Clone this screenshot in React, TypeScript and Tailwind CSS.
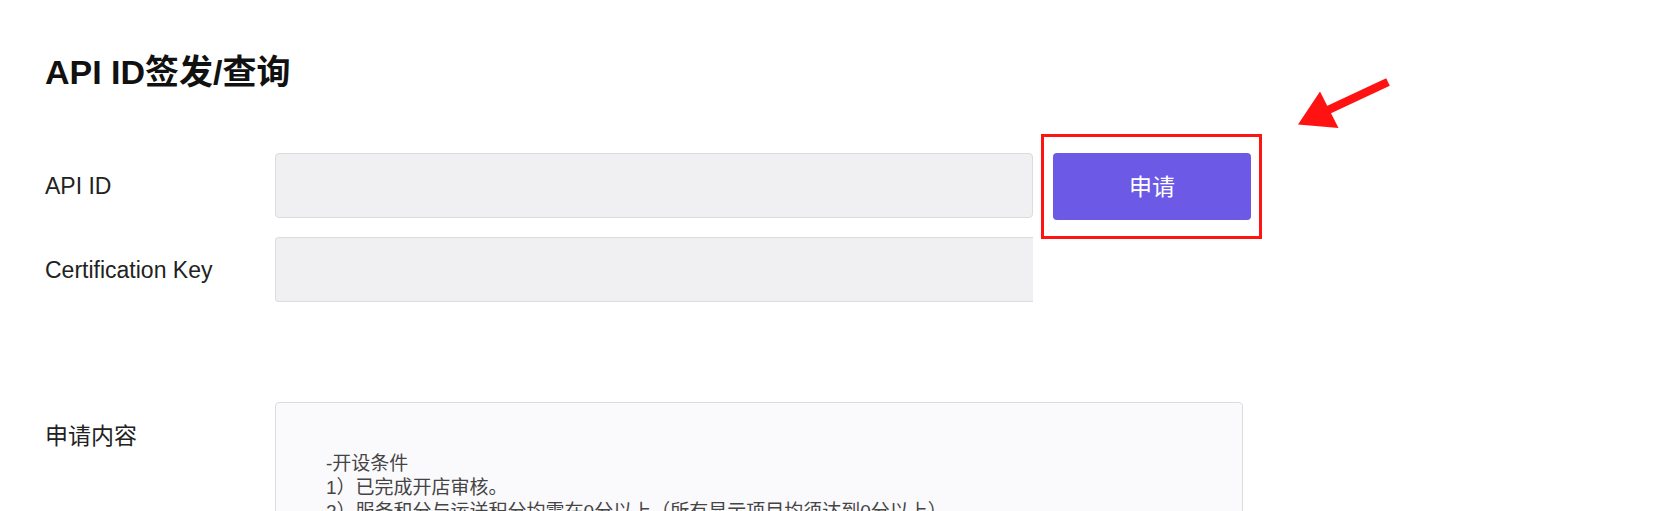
import React from "react";

const font = { fontFamily: '"Liberation Sans", "Noto Sans CJK SC", sans-serif' };

export default function App() {
  return (
    <div
      className="relative w-full h-[511px] overflow-hidden bg-white pl-[45px] pt-[52px] text-[#222]"
      style={font}
    >
      <h1 className="text-[34px] leading-[40px] font-bold text-[#111]">API ID签发/查询</h1>

      <div className="mt-[61px] flex items-start">
        <div className="w-[230px] h-[65px] flex items-center text-[23px] leading-[28px]">API ID</div>
        <div className="w-[758px] h-[65px] rounded-[4px] border border-[#dcdcdc] bg-[#f0f0f2]" />
        <button className="ml-[20px] w-[198px] h-[67px] rounded-[4px] bg-[#6c5ae6] text-white text-[23px] leading-[28px]">
          申请
        </button>
      </div>

      <div className="mt-[17px] flex items-start">
        <div className="w-[230px] h-[65px] flex items-center text-[23px] leading-[28px]">Certification Key</div>
        <div className="w-[758px] h-[65px] rounded-l-[4px] border border-r-0 border-[#dcdcdc] bg-[#f0f0f2]" />
      </div>

      <div className="mt-[100px] flex items-start">
        <div className="w-[230px] pt-[20px] text-[23px] leading-[28px]">申请内容</div>
        <div className="w-[968px] h-[200px] rounded-[4px] border border-[#dcdcdc] bg-[#fafafc] pl-[50px] pt-[49px] text-[19px] leading-[24px] text-[#444]">
          <div>-开设条件</div>
          <div>1）已完成开店审核。</div>
          <div>2）服务和分与运送积分均需在0分以上（所有显示项目均须达到0分以上）</div>
        </div>
      </div>

      <div className="absolute left-[1041px] top-[134px] w-[221px] h-[105px] border-[3px] border-[#ff1414]" />

      <svg
        className="absolute left-[1290px] top-[70px]"
        width="110"
        height="65"
        viewBox="0 0 110 65"
      >
        <line x1="98" y1="12" x2="36" y2="41" stroke="#ff1212" strokeWidth="8.5" />
        <polygon points="8,54.5 30,21.5 48.5,58" fill="#ff1212" />
      </svg>
    </div>
  );
}
